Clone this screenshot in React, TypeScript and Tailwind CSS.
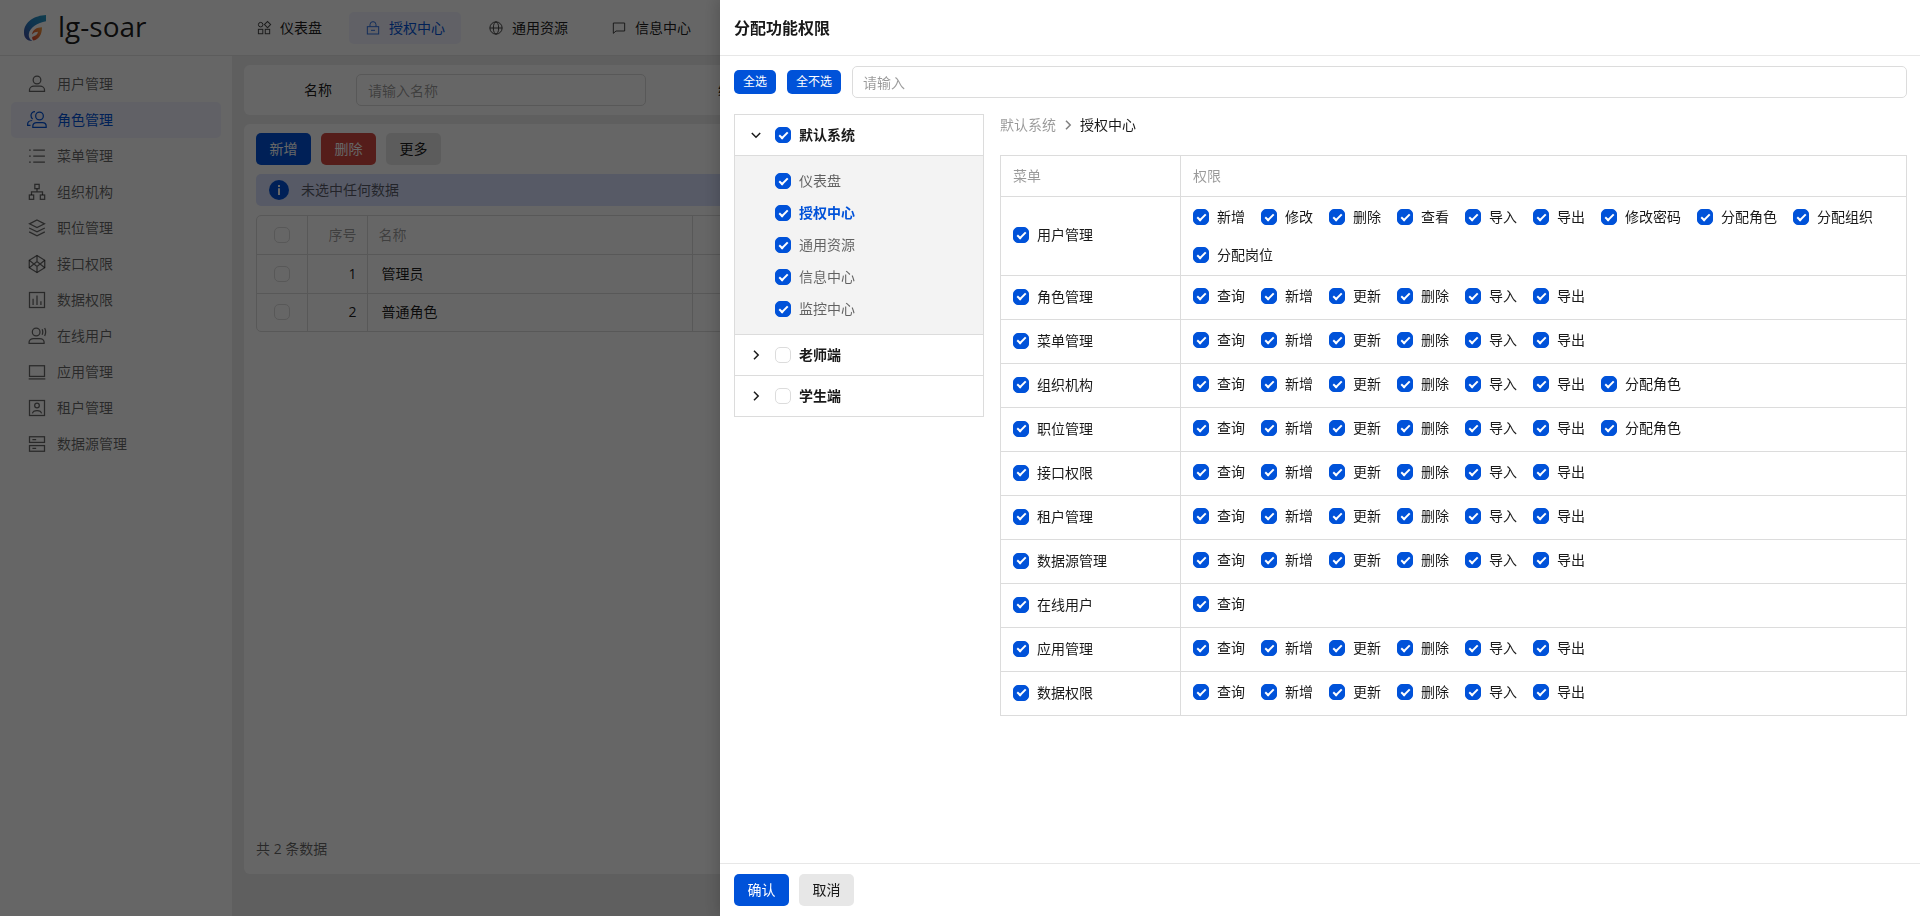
import { useId, useState, type ReactNode } from "react";

type IconProps = { className?: string; size?: number; children: ReactNode };

function Icon({ className = "", size = 20, children }: IconProps) {
  return (
    <svg
      className={"shrink-0 " + className}
      width={size}
      height={size}
      viewBox="0 0 24 24"
      fill="none"
      stroke="currentColor"
      strokeWidth={1.5}
      aria-hidden="true"
    >
      {children}
    </svg>
  );
}

const sideMenu: { label: string; active?: boolean; icon: ReactNode }[] = [
  {
    label: "用户管理",
    icon: (
      <>
        <circle cx="12" cy="7.2" r="4.6" />
        <path d="M3 20.9v-2c0-2.6 2.6-4.3 5.2-4.3h7.6c2.6 0 5.2 1.7 5.2 4.3v2z" />
      </>
    ),
  },
  {
    label: "角色管理",
    active: true,
    icon: (
      <>
        <circle cx="15" cy="7.2" r="4.6" />
        <path d="M7 20.9v-1.6c0-2.6 2-4.3 4.4-4.3h7.2c2.4 0 4.4 1.7 4.4 4.3v1.6z" />
        <path d="M9.6 2C6.4 2 4.8 4.3 4.8 6.6c0 1.9.8 3.3 2 4.1M6.2 12.6C3 12.8.8 14.6.8 16.8v1.6h3.4" />
      </>
    ),
  },
  {
    label: "菜单管理",
    icon: <path d="M7.5 4.800H21.500M7.500 12H21.500M7.500 19.200H21.500M2.500 4.800h2M2.500 12h2M2.500 19.200h2" />,
  },
  {
    label: "组织机构",
    icon: (
      <>
        <rect x="9.4" y="2.8" width="5.2" height="5.2" />
        <rect x="2.8" y="15.6" width="5.2" height="5.2" />
        <rect x="16" y="15.6" width="5.2" height="5.2" />
        <path d="M12 8v3.800M5.400 15.600v-3.800h13.200v3.800" />
      </>
    ),
  },
  {
    label: "职位管理",
    icon: (
      <>
        <path d="M12 2.4 21 7l-9 4.600L3 7z" />
        <path d="m2.600 12 9.400 4.700 9.400-4.700M2.600 16.600 12 21.300l9.400-4.700" />
      </>
    ),
  },
  {
    label: "接口权限",
    icon: (
      <>
        <path d="m12 1.800 9.300 5.700v9L12 22.200l-9.300-5.700v-9z" />
        <path d="M2.700 7.500 12 15l9.300-7.500M2.700 16.500 12 9l9.300 7.500M12 1.800V9M12 15v7.200" />
      </>
    ),
  },
  {
    label: "数据权限",
    icon: (
      <>
        <rect x="3" y="3" width="18" height="18" />
        <path d="M7.300 10.500v7.500M12 6.500V18M16.700 13.500V18" />
      </>
    ),
  },
  {
    label: "在线用户",
    icon: (
      <>
        <circle cx="11" cy="7.2" r="4.6" />
        <path d="M2.500 20.900v-1.600c0-2.600 2.600-4.300 5.200-4.300h7.600c2.600 0 5.200 1.700 5.200 4.300v1.600z" />
        <path d="M18.200 4c.9 2 .9 4.400 0 6.400M21.200 2.500c1.500 3 1.500 6.400 0 9.400" />
      </>
    ),
  },
  {
    label: "应用管理",
    icon: (
      <>
        <rect x="3" y="4.5" width="18" height="12.8" />
        <path d="M2 20.300h20" />
      </>
    ),
  },
  {
    label: "租户管理",
    icon: (
      <>
        <rect x="3" y="3" width="18" height="18" />
        <circle cx="12" cy="9" r="2.8" />
        <path d="M6.500 18.500c.6-2.600 2.600-3.500 5.500-3.500s4.900.9 5.500 3.500" />
      </>
    ),
  },
  {
    label: "数据源管理",
    icon: (
      <>
        <rect x="3" y="3.3" width="18" height="6.8" />
        <rect x="3" y="13.9" width="18" height="6.8" />
        <path d="M6.500 6.700H11M6.500 17.300H11" />
      </>
    ),
  },
];

const topMenu: { label: string; active?: boolean; icon: ReactNode }[] = [
  {
    label: "仪表盘",
    icon: (
      <>
        <circle cx="7" cy="7" r="3.4" />
        <rect x="14" y="3.6" width="6.6" height="6.6" transform="rotate(45 17.3 6.9)" />
        <rect x="3.6" y="14" width="6.6" height="6.6" />
        <rect x="13.9" y="14" width="6.6" height="6.6" />
      </>
    ),
  },
  {
    label: "授权中心",
    active: true,
    icon: (
      <>
        <rect x="3.5" y="10" width="17" height="11" />
        <path d="M7.500 10V7a4.500 4.500 0 0 1 9 0v3M9 15.500h6" />
      </>
    ),
  },
  {
    label: "通用资源",
    icon: (
      <>
        <circle cx="12" cy="12" r="9.2" />
        <ellipse cx="12" cy="12" rx="4" ry="9.2" />
        <path d="M2.800 12h18.400" />
      </>
    ),
  },
  { label: "信息中心", icon: <path d="M3.500 20V4.500h17v12H7.500z" /> },
];

function Check({
  label,
  defaultChecked = true,
  className = "",
}: {
  label?: string;
  defaultChecked?: boolean;
  className?: string;
}) {
  const id = useId();
  return (
    <span className="flex items-center">
      <input
        id={id}
        type="checkbox"
        defaultChecked={defaultChecked}
        aria-label={label ? undefined : "选择"}
        className="inline-grid size-4 shrink-0 appearance-none place-items-center rounded-[5px] border border-[#dcdcdc] bg-white before:mb-[2px] before:block before:h-[9px] before:w-[5px] before:rotate-45 before:border-r-2 before:border-b-2 before:border-white checked:border-[#0052d9] checked:bg-[#0052d9]"
      />
      {label && (
        <label htmlFor={id} className={"pl-2 whitespace-nowrap " + className}>
          {label}
        </label>
      )}
    </span>
  );
}

function Button({ tone, children }: { tone: "primary" | "danger" | "default"; children: ReactNode }) {
  const tones = {
    primary: "bg-[#0052d9] text-white",
    danger: "bg-[#d54941] text-white",
    default: "bg-[#e7e7e7] text-black/90",
  };
  return (
    <button type="button" className={"h-8 min-w-[55px] rounded-[5px] px-3 text-sm " + tones[tone]}>
      {children}
    </button>
  );
}

function Chevron({ open, className = "" }: { open?: boolean; className?: string }) {
  return (
    <svg
      className={"shrink-0 " + className}
      width="16"
      height="16"
      viewBox="0 0 16 16"
      fill="none"
      stroke="currentColor"
      strokeWidth="1.5"
      aria-hidden="true"
    >
      <path d={open ? "m3.800 6 4.200 4.200L12.200 6" : "M6 3.800 10.200 8 6 12.200"} />
    </svg>
  );
}

function Logo() {
  return (
    <svg width="22" height="26" viewBox="0 0 22 26" aria-hidden="true">
      <defs>
        <linearGradient id="logoBlue" x1="1" y1="0" x2="0" y2="1">
          <stop offset="0" stopColor="#2a9bc4" />
          <stop offset="0.5" stopColor="#2380c4" />
          <stop offset="1" stopColor="#43459a" />
        </linearGradient>
        <linearGradient id="logoOrange" x1="1" y1="0" x2="0" y2="1">
          <stop offset="0" stopColor="#f0a040" />
          <stop offset="1" stopColor="#e0402c" />
        </linearGradient>
      </defs>
      <path
        fill="url(#logoBlue)"
        d="M22 0C11 .5 0 6.500 0 17.500 0 23 3 26 8.500 26 5.500 24.500 4.500 22 4.800 19 5.800 12.500 13.500 8 22 6.300z"
      />
      <path
        fill="url(#logoOrange)"
        d="M18 12.200C12.500 12.200 8.500 15 8 19.500c1.800-2 3.800-2.700 6-2.700-.3 2.400-2.400 4.200-5.800 5.200 0 0-.3 2.400 1.300 3.600C14.800 24.500 18 19.500 18 12.200z"
      />
    </svg>
  );
}

function Header() {
  return (
    <header className="flex h-14 shrink-0 items-center border-b border-[#e7e7e7] bg-white">
      <div className="flex w-60 shrink-0 items-center gap-3 pl-6">
        <Logo />
        <span className="pb-1 text-[28px] leading-9 text-black/90">lg-soar</span>
      </div>
      <nav className="flex gap-[11px]">
        {topMenu.map((item) => (
          <a
            key={item.label}
            href="#"
            className={
              "flex h-8 items-center gap-2 rounded-[5px] px-4 text-sm " +
              (item.active ? "bg-[#f2f3ff] text-[#0052d9]" : "text-black/90")
            }
          >
            <Icon size={16} className="opacity-80">
              {item.icon}
            </Icon>
            {item.label}
          </a>
        ))}
      </nav>
    </header>
  );
}

function Sidebar() {
  return (
    <nav className="w-[232px] shrink-0 bg-white px-[11px] py-[10px]">
      {sideMenu.map((item) => (
        <a
          key={item.label}
          href="#"
          className={
            "flex h-9 items-center gap-[10px] rounded-[5px] pl-4 text-sm " +
            (item.active ? "bg-[#f2f3ff] text-[#0052d9]" : "text-black/60")
          }
        >
          <Icon>{item.icon}</Icon>
          {item.label}
        </a>
      ))}
    </nav>
  );
}

function SearchField({ label, placeholder }: { label: string; placeholder: string }) {
  const id = useId();
  return (
    <div className="flex items-center">
      <label htmlFor={id} className="w-[100px] shrink-0 pr-6 text-right text-sm text-black/90">
        {label}
      </label>
      <input
        id={id}
        placeholder={placeholder}
        className="h-8 min-w-0 flex-1 rounded-[5px] border border-[#dcdcdc] bg-white px-[11px] text-sm placeholder:text-black/40"
      />
    </div>
  );
}

const roles = ["管理员", "普通角色"];

function RolePage() {
  return (
    <main className="flex min-w-0 flex-1 flex-col gap-[9px] bg-[#eeeeee] pt-[9px] pr-5 pb-[42px] pl-3">
      <form className="grid grid-cols-4 gap-6 rounded-md bg-white px-3 py-[9px]">
        <SearchField label="名称" placeholder="请输入名称" />
        <SearchField label="编码" placeholder="请输入编码" />
      </form>
      <section className="flex flex-1 flex-col rounded-md bg-white px-3 py-[9px]">
        <div className="flex gap-[10px]">
          <Button tone="primary">新增</Button>
          <Button tone="danger">删除</Button>
          <Button tone="default">更多</Button>
        </div>
        <div className="mt-[9px] flex h-8 items-center gap-3 rounded-[5px] bg-[#d9e1ff] pl-[13px] text-sm text-black/60">
          <svg width="20" height="20" viewBox="0 0 20 20" aria-hidden="true">
            <circle cx="10" cy="10" r="10" fill="#0052d9" />
            <path d="M9 5h2v2H9zM9 8.300h2V15H9z" fill="#fff" />
          </svg>
          未选中任何数据
        </div>
        <div className="mt-[9px] rounded-[5px] border border-[#dcdcdc]">
          <table className="w-full table-fixed border-collapse text-sm">
            <colgroup>
              <col className="w-[50px]" />
              <col className="w-[60px]" />
              <col className="w-[325px]" />
              <col />
            </colgroup>
            <thead>
              <tr className="h-[38px] border-b border-[#dcdcdc] text-black/40">
                <th className="border-r border-[#dcdcdc]">
                  <span className="flex justify-center">
                    <Check defaultChecked={false} />
                  </span>
                </th>
                <th className="border-r border-[#dcdcdc] pr-[10px] text-right font-normal">序号</th>
                <th className="border-r border-[#dcdcdc] pl-[11px] text-left font-normal">名称</th>
                <th className="font-normal">编码</th>
              </tr>
            </thead>
            <tbody>
              {roles.map((role, i) => (
                <tr key={role} className="h-[39px] border-b border-[#dcdcdc] text-black/90 last:h-[38px] last:border-b-0">
                  <td className="border-r border-[#dcdcdc]">
                    <span className="flex justify-center">
                      <Check defaultChecked={false} />
                    </span>
                  </td>
                  <td className="border-r border-[#dcdcdc] pr-[10px] text-right">{i + 1}</td>
                  <td className="border-r border-[#dcdcdc] pl-[14px]">{role}</td>
                  <td />
                </tr>
              ))}
            </tbody>
          </table>
        </div>
        <p className="mt-auto pb-[6px] text-sm text-black/60">共 2 条数据</p>
      </section>
    </main>
  );
}

const subsystems = ["仪表盘", "授权中心", "通用资源", "信息中心", "监控中心"];
const base = ["查询", "新增", "更新", "删除", "导入", "导出"];
const permissions: { menu: string; actions: string[] }[] = [
  {
    menu: "用户管理",
    actions: ["新增", "修改", "删除", "查看", "导入", "导出", "修改密码", "分配角色", "分配组织", "分配岗位"],
  },
  { menu: "角色管理", actions: base },
  { menu: "菜单管理", actions: base },
  { menu: "组织机构", actions: [...base, "分配角色"] },
  { menu: "职位管理", actions: [...base, "分配角色"] },
  { menu: "接口权限", actions: base },
  { menu: "租户管理", actions: base },
  { menu: "数据源管理", actions: base },
  { menu: "在线用户", actions: ["查询"] },
  { menu: "应用管理", actions: base },
  { menu: "数据权限", actions: base },
];

function TreeRow({
  label,
  checked,
  open,
  onToggle,
}: {
  label: string;
  checked: boolean;
  open: boolean;
  onToggle: () => void;
}) {
  return (
    <div className="box-content flex h-10 items-center pl-[13px]">
      <button type="button" aria-label={"展开" + label} aria-expanded={open} onClick={onToggle} className="mr-[11px] text-black/90">
        <Chevron open={open} />
      </button>
      <Check label={label} defaultChecked={checked} className="font-bold" />
    </div>
  );
}

function SystemTree() {
  const [open, setOpen] = useState(true);
  return (
    <div className="w-[250px] shrink-0 divide-y divide-[#dcdcdc] self-start border border-[#dcdcdc] text-black/90">
      <TreeRow label="默认系统" checked open={open} onToggle={() => setOpen(!open)} />
      {open && (
        <ul className="bg-[#f3f3f3] py-[9px] pl-10">
          {subsystems.map((name) => (
            <li key={name} className="flex h-8 items-center">
              <Check label={name} className={name === "授权中心" ? "font-bold text-[#0052d9]" : "text-black/60"} />
            </li>
          ))}
        </ul>
      )}
      <TreeRow label="老师端" checked={false} open={false} onToggle={() => {}} />
      <TreeRow label="学生端" checked={false} open={false} onToggle={() => {}} />
    </div>
  );
}

function PermissionTable() {
  return (
    <table className="w-full border-collapse border border-[#dcdcdc] text-black/90">
      <thead>
        <tr className="h-[41px] text-black/40">
          <th className="w-[180px] border border-[#dcdcdc] px-3 text-left font-normal">菜单</th>
          <th className="border border-[#dcdcdc] px-3 text-left font-normal">权限</th>
        </tr>
      </thead>
      <tbody>
        {permissions.map((row) => (
          <tr key={row.menu} className="h-11">
            <td className="border border-[#dcdcdc] px-3 pt-2 pb-[10px]">
              <Check label={row.menu} />
            </td>
            <td className="border border-[#dcdcdc] px-3 py-[9px] align-top">
              <div className="flex flex-wrap gap-4">
                {row.actions.map((action) => (
                  <Check key={action} label={action} />
                ))}
              </div>
            </td>
          </tr>
        ))}
      </tbody>
    </table>
  );
}

function PermissionDrawer() {
  return (
    <div
      role="dialog"
      aria-label="分配功能权限"
      className="absolute inset-y-0 right-0 flex w-5/8 flex-col bg-white text-sm leading-[22px] shadow-[0_0_16px_2px_rgba(0,0,0,0.2)]"
    >
      <header className="flex h-14 shrink-0 items-center border-b border-[#e7e7e7] px-[14px]">
        <h2 className="text-base font-semibold text-black/90">分配功能权限</h2>
      </header>
      <div className="min-h-0 flex-1 overflow-y-auto py-[10px] pr-[13px] pl-[14px]">
        <div className="flex items-center gap-[11px]">
          <button type="button" className="h-6 shrink-0 rounded-[5px] bg-[#0052d9] px-[9px] text-xs text-white">
            全选
          </button>
          <button type="button" className="h-6 shrink-0 rounded-[5px] bg-[#0052d9] px-[9px] text-xs text-white">
            全不选
          </button>
          <input
            aria-label="搜索"
            placeholder="请输入"
            className="h-8 min-w-0 flex-1 rounded-[5px] border border-[#dcdcdc] px-[10px] placeholder:text-black/40"
          />
        </div>
        <div className="mt-4 flex gap-4">
          <SystemTree />
          <div className="min-w-0 flex-1">
            <nav className="mb-[19px] flex items-center text-black/90">
              <a href="#" className="text-black/40">
                默认系统
              </a>
              <Chevron className="mx-1 text-black/50" />
              <span>授权中心</span>
            </nav>
            <PermissionTable />
          </div>
        </div>
      </div>
      <footer className="flex shrink-0 gap-[10px] border-t border-[#e7e7e7] px-[14px] py-[10px]">
        <Button tone="primary">确认</Button>
        <Button tone="default">取消</Button>
      </footer>
    </div>
  );
}

export default function App() {
  return (
    <div className="relative flex h-screen flex-col overflow-hidden font-['Open_Sans','Noto_Sans_CJK_SC',sans-serif]">
      <Header />
      <div className="flex min-h-0 flex-1">
        <Sidebar />
        <RolePage />
      </div>
      <div className="fixed inset-0 bg-black/60">
        <PermissionDrawer />
      </div>
    </div>
  );
}
